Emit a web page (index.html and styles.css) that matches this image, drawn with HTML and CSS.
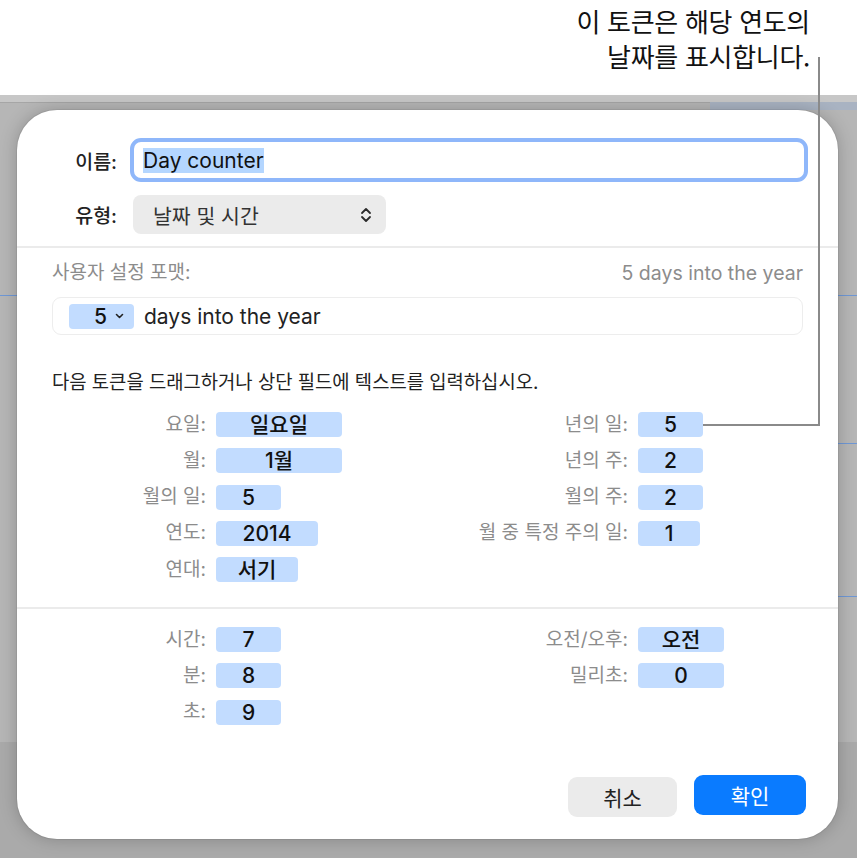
FILE: index.html
```html
<!DOCTYPE html>
<html lang="ko">
<head>
  <meta charset="UTF-8">
  <title>날짜 및 시간 토큰</title>
  <link rel="stylesheet" href="styles.css">
</head>
<body>
  <div class="callout">
    <p class="callout-text">이 토큰은 해당 연도의<br>날짜를 표시합니다.</p>
  </div>
  <div class="callout-line"></div>

  <main class="backdrop">
    <section class="dialog">
      <div class="dialog-head">
        <span class="field-label">이름:</span>
        <div class="name-input"><span class="selected">Day counter</span></div>
        <span class="field-label">유형:</span>
        <div class="select">
          <span>날짜 및 시간</span>
          <svg class="updown" width="12" height="18" viewBox="0 0 12 18">
            <path d="M2 7 L6 3 L10 7 M2 11 L6 15 L10 11" fill="none" stroke="#2a2a2a" stroke-width="1.8" stroke-linecap="round" stroke-linejoin="round"/>
          </svg>
        </div>
      </div>

      <div class="format">
        <div class="format-top">
          <span>사용자 설정 포맷:</span>
          <span class="preview">5 days into the year</span>
        </div>
        <div class="format-field">
          <span class="token token-pick">5
            <svg width="9" height="6" viewBox="0 0 9 6"><path d="M1.5 1.5 L4.5 4.5 L7.5 1.5" fill="none" stroke="#222" stroke-width="1.6" stroke-linecap="round" stroke-linejoin="round"/></svg>
          </span>
          <span>days into the year</span>
        </div>
        <p class="hint">다음 토큰을 드래그하거나 상단 필드에 텍스트를 입력하십시오.</p>

        <div class="token-grid">
          <span class="tk-label">요일:</span><span class="token w126">일요일</span>
          <span class="tk-label">년의 일:</span><span class="token w65">5</span>

          <span class="tk-label">월:</span><span class="token w126">1월</span>
          <span class="tk-label">년의 주:</span><span class="token w65">2</span>

          <span class="tk-label">월의 일:</span><span class="token w65">5</span>
          <span class="tk-label">월의 주:</span><span class="token w65">2</span>

          <span class="tk-label">연도:</span><span class="token w102">2014</span>
          <span class="tk-label">월 중 특정 주의 일:</span><span class="token w62">1</span>

          <span class="tk-label">연대:</span><span class="token w82">서기</span>
        </div>
      </div>

      <div class="time">
        <div class="token-grid">
          <span class="tk-label">시간:</span><span class="token w65">7</span>
          <span class="tk-label">오전/오후:</span><span class="token w86">오전</span>

          <span class="tk-label">분:</span><span class="token w65">8</span>
          <span class="tk-label">밀리초:</span><span class="token w86">0</span>

          <span class="tk-label">초:</span><span class="token w65">9</span>
        </div>

        <div class="actions">
          <button class="btn btn-cancel">취소</button>
          <button class="btn btn-ok">확인</button>
        </div>
      </div>
    </section>
  </main>
</body>
</html>
```

FILE: styles.css
```css
* {
  box-sizing: border-box;
}
body {
  margin: 0;
  width: 857px;
  height: 860px;
  background: #fff;
  font-family: 'Inter', 'Noto Sans CJK KR', sans-serif;
  color: #1d1d1d;
  position: relative;
  overflow: hidden;
}
.callout {
  height: 95px;
  padding: 3px 47px 0 0;
  text-align: right;
}
.callout-text {
  margin: 0;
  font-family: 'Noto Sans CJK KR', sans-serif;
  font-size: 26px;
  line-height: 35px;
  color: #111;
  letter-spacing: -0.3px;
}
/* annotation leader line, drawn over the dialog */
.callout-line {
  position: absolute;
  left: 703px;
  top: 57px;
  width: 117px;
  height: 369px;
  border-right: 2px solid #8a8a8a;
  border-bottom: 2px solid #8a8a8a;
  z-index: 5;
}
.backdrop {
  height: 763px;
  padding: 15px 19px 19px 17px;
  background:
    linear-gradient(#a9b3c2, #a9b3c2) right 0 top 7px / 147px 8px no-repeat,
    linear-gradient(#a6a6a6, #a6a6a6) 0 7px / 100% 1px no-repeat,
    linear-gradient(#c7c7c7, #c7c7c7) 0 0 / 100% 7px no-repeat,
    linear-gradient(#6f98d6, #6f98d6) 0 200px / 100% 1px no-repeat,
    linear-gradient(#6f98d6, #6f98d6) right 0 top 348px / 20px 1px no-repeat,
    linear-gradient(#6f98d6, #6f98d6) right 0 top 501px / 20px 1px no-repeat,
    linear-gradient(#aaaaaa, #aaaaaa) 0 647px / 100% 120px no-repeat,
    #b6b6b6;
}
.dialog {
  height: 729px;
  background: #fff;
  border-radius: 40px;
  box-shadow: 0 0 18px rgba(0, 0, 0, 0.22), 0 0 0 1px rgba(0, 0, 0, 0.06);
  display: flex;
  flex-direction: column;
}
.dialog-head {
  display: grid;
  grid-template-columns: 64px 1fr;
  column-gap: 13px;
  row-gap: 13px;
  align-items: center;
  padding: 28px 30px 12px 36px;
}
.field-label {
  text-align: right;
  font-size: 19.5px;
  font-weight: 500;
  color: #222;
}
.name-input {
  height: 44px;
  border: 4px solid #8fb7fa;
  border-radius: 11px;
  padding-left: 9px;
  display: flex;
  align-items: center;
  font-size: 21px;
}
.selected {
  background: #b4d6ff;
  color: #111;
  line-height: 25px;
}
.select {
  margin-left: 3px;
  width: 253px;
  height: 39px;
  background: #ebebeb;
  border-radius: 8px;
  padding: 0 14px 0 20px;
  display: flex;
  align-items: center;
  justify-content: space-between;
  font-size: 20.5px;
  color: #333;
}
.format {
  border-top: 2px solid #ebebeb;
  padding: 14px 35px 25px 35px;
}
.format-top {
  display: flex;
  justify-content: space-between;
  align-items: center;
  font-size: 19px;
  line-height: 22px;
  color: #8c8c8c;
}
.preview {
  font-size: 19.5px;
}
.format-field {
  margin-top: 13px;
  height: 38px;
  border: 1px solid #ededed;
  border-radius: 9px;
  padding-left: 16px;
  display: flex;
  align-items: center;
  gap: 10px;
  font-size: 21px;
  color: #222;
}
.token {
  height: 25px;
  line-height: 25px;
  background: #c2dcff;
  border-radius: 4px;
  display: flex;
  align-items: center;
  justify-content: center;
  font-size: 21px;
  font-weight: 500;
  color: #111;
}
.token-pick {
  width: 65px;
  justify-content: flex-end;
  gap: 8px;
  padding-right: 10px;
}
.hint {
  margin: 37px 0 0;
  font-size: 18.8px;
  line-height: 22px;
  color: #222;
}
.token-grid {
  display: grid;
  grid-template-columns: 154px 212px 190px 1fr;
  grid-auto-rows: 25px;
  column-gap: 10px;
  row-gap: 11.25px;
  align-items: center;
  justify-items: start;
  margin-top: 18px;
  margin-left: -35px;
  padding-left: 35px;
}
.tk-label {
  justify-self: end;
  font-size: 19px;
  line-height: 22px;
  color: #8c8c8c;
}
.w62 { width: 62px; }
.w65 { width: 65px; }
.w82 { width: 82px; }
.w86 { width: 86px; }
.w102 { width: 102px; }
.w126 { width: 126px; }
.time {
  flex: 1;
  border-top: 2px solid #ebebeb;
  padding: 0 32px 22px 35px;
  display: flex;
  flex-direction: column;
}
.time .token-grid {
  margin-top: 18px;
}
.actions {
  margin-top: auto;
  display: flex;
  justify-content: flex-end;
  align-items: center;
  gap: 17px;
}
.btn {
  border: none;
  border-radius: 9px;
  font-family: 'Noto Sans CJK KR', sans-serif;
  font-size: 21px;
  height: 40px;
  cursor: pointer;
}
.btn-cancel {
  width: 109px;
  background: #ebebeb;
  color: #222;
  margin-top: 5px;
}
.btn-ok {
  width: 112px;
  background: #0a7bff;
  color: #fff;
}
```
